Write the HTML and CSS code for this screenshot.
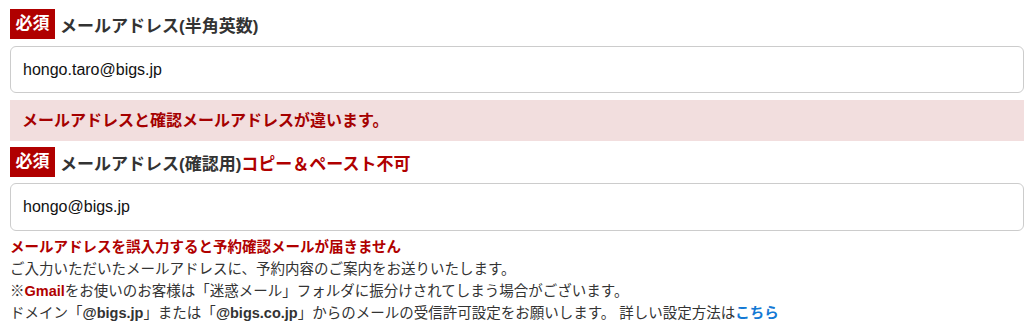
FILE: index.html
```html
<!DOCTYPE html>
<html lang="ja">
<head>
  <meta charset="UTF-8">
  <meta name="viewport" content="width=device-width, initial-scale=1.0">
  <title>メールアドレス入力</title>
  <link rel="stylesheet" href="styles.css">
</head>
<body>
  <div class="form">
    <div class="field-label">
      <span class="required">必須</span>
      <span class="label-text">メールアドレス(半角英数)</span>
    </div>
    <input class="text-input" type="email" value="hongo.taro@bigs.jp">

    <div class="error-box">メールアドレスと確認メールアドレスが違います。</div>

    <div class="field-label second">
      <span class="required">必須</span>
      <span class="label-text">メールアドレス(確認用)<span class="warn">コピー＆ペースト不可</span></span>
    </div>
    <input class="text-input confirm" type="email" value="hongo@bigs.jp">

    <div class="notes">
      <p class="notes-alert">メールアドレスを誤入力すると予約確認メールが届きません</p>
      <p>ご入力いただいたメールアドレスに、予約内容のご案内をお送りいたします。</p>
      <p>※<strong class="gmail">Gmail</strong>をお使いのお客様は「迷惑メール」フォルダに振分けされてしまう場合がございます。</p>
      <p>ドメイン「<strong>@bigs.jp</strong>」または「<strong>@bigs.co.jp</strong>」からのメールの受信許可設定をお願いします。 詳しい設定方法は<a href="#">こちら</a></p>
    </div>
  </div>
</body>
</html>
```

FILE: styles.css
```css
body {
  margin: 0;
  padding: 9px 6px 0 10px;
  background: #fff;
  color: #333;
  font-family: "Liberation Sans", "Noto Sans CJK JP", sans-serif;
}

.field-label {
  display: flex;
  align-items: center;
  gap: 5px;
  height: 30px;
}

.field-label.second {
  margin-top: 6px;
}

.required {
  display: inline-block;
  width: 45px;
  height: 30px;
  line-height: 30px;
  text-align: center;
  background: #b00000;
  color: #fff;
  font-size: 17px;
  font-weight: bold;
}

.label-text {
  font-size: 17px;
  font-weight: bold;
  color: #333;
}

.warn {
  color: #b00000;
}

.text-input {
  display: block;
  box-sizing: border-box;
  width: 100%;
  height: 47px;
  margin: 7px 0 0;
  padding: 0 12px;
  border: 1px solid #ccc;
  border-radius: 6px;
  font-family: "Liberation Sans", "Noto Sans CJK JP", sans-serif;
  font-size: 16px;
  color: #111;
  background: #fff;
}

.text-input.confirm {
  margin-top: 6px;
  height: 48px;
}

.error-box {
  margin-top: 7px;
  height: 41px;
  line-height: 41px;
  padding: 0 12px;
  background: #f2dede;
  color: #a50000;
  font-size: 16px;
  font-weight: bold;
}

.notes {
  margin-top: 5px;
  font-size: 14.5px;
  color: #333;
}

.notes p {
  margin: 0;
  line-height: 22px;
}

.notes-alert {
  color: #b00000;
  font-weight: bold;
}

.gmail {
  color: #b00000;
}

.notes a {
  color: #1479d4;
  font-weight: bold;
  text-decoration: none;
}
```
